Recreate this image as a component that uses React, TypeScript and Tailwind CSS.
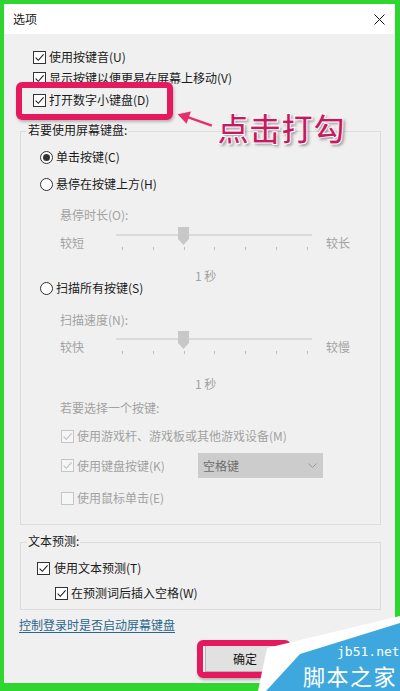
import React from 'react';

const Check: React.FC<{ checked?: boolean; disabled?: boolean }> = ({ checked = true, disabled = false }) => (
  <span
    className={`w-[13px] h-[13px] border flex items-center justify-center shrink-0 ${
      disabled ? 'border-[#c6c6c6] bg-[#f6f6f6]' : 'border-[#333333] bg-white'
    }`}
  >
    {checked && (
      <svg width="11" height="11" viewBox="0 0 11 11">
        <path d="M1.6 5.6 L4.3 8.3 L9.6 2.4" fill="none" stroke={disabled ? '#bdbdbd' : '#1f1f1f'} strokeWidth="1.1" />
      </svg>
    )}
  </span>
);

const Radio: React.FC<{ selected?: boolean }> = ({ selected = false }) => (
  <span className="w-[13px] h-[13px] rounded-full border border-[#333333] bg-white flex items-center justify-center shrink-0">
    {selected && <span className="w-[7px] h-[7px] rounded-full bg-[#333333]" />}
  </span>
);

const Row: React.FC<{ className?: string; children: React.ReactNode }> = ({ className = '', children }) => (
  <div className={`flex items-center h-[12px] leading-[12px] whitespace-nowrap ${className}`}>{children}</div>
);

const Slider: React.FC<{ left: string; right: string; className?: string }> = ({ left, right, className = '' }) => (
  <div className={`flex h-[26px] pl-[39px] text-[#a2a2a2] ${className}`}>
    <span className="w-[56px] mt-[11px] h-[12px] leading-[12px]">{left}</span>
    <div className="relative w-[196px] flex flex-col">
      <div className="mt-[8px] h-[2px] bg-[#dadada]" />
      <div className="mt-[11px] h-[3px] flex justify-between pl-[6px] pr-[4px]">
        {Array.from({ length: 7 }).map((_, i) => (
          <span key={i} className="w-px h-[3px] bg-[#bdbdbd]" />
        ))}
      </div>
      <svg className="absolute left-[62px] top-[1px]" width="11" height="18" viewBox="0 0 11 18">
        <path d="M0 0H11V12L5.5 18L0 12Z" fill="#c8c8c8" />
      </svg>
    </div>
    <span className="ml-[14px] mt-[11px] h-[12px] leading-[12px]">{right}</span>
  </div>
);

export default function App() {
  return (
    <div className="relative w-[400px] h-[691px] bg-[#2fd62f] pt-[4px] pl-[4px] pr-[5px] pb-[8px] overflow-hidden font-['Noto_Sans_CJK_SC','Noto_Sans',sans-serif] text-[12px] text-[#1a1a1a]">
      <div className="h-full flex flex-col bg-[#f0f0f0]">
        {/* Title bar */}
        <div className="h-[30px] shrink-0 bg-white flex items-center justify-between pl-[9px] pr-[10px]">
          <span className="leading-[12px]">选项</span>
          <svg width="11" height="11" viewBox="0 0 11 11">
            <path d="M0.5 0.5 L10.5 10.5 M10.5 0.5 L0.5 10.5" stroke="#111" strokeWidth="1" />
          </svg>
        </div>

        {/* Top options */}
        <Row className="mt-[17px] ml-[29px] gap-[3px]">
          <Check />
          <span>使用按键音(U)</span>
        </Row>
        <Row className="mt-[9px] ml-[29px] gap-[3px]">
          <Check />
          <span>显示按键以便更易在屏幕上移动(V)</span>
        </Row>
        <Row className="mt-[10px] ml-[29px] gap-[3px]">
          <Check />
          <span>打开数字小键盘(D)</span>
        </Row>

        {/* On-screen keyboard group */}
        <div className="mt-[25px] ml-[16px] mr-[14px] border border-[#dcdcdc] flex flex-col pb-[20px]">
          <Row className="-mt-[8px] ml-[6px] self-start px-[1px] bg-[#f0f0f0]">若要使用屏幕键盘:</Row>
          <Row className="mt-[15px] pl-[19px] gap-[3px]">
            <Radio selected />
            <span>单击按键(C)</span>
          </Row>
          <Row className="mt-[15px] pl-[19px] gap-[3px]">
            <Radio />
            <span>悬停在按键上方(H)</span>
          </Row>
          <Row className="mt-[19px] pl-[39px] text-[#a2a2a2]">悬停时长(O):</Row>
          <Slider left="较短" right="较长" className="mt-[5px]" />
          <Row className="mt-[18px] pl-[174px] text-[#a2a2a2]">1 秒</Row>
          <Row className="pl-[19px] gap-[3px]">
            <Radio />
            <span>扫描所有按键(S)</span>
          </Row>
          <Row className="mt-[20px] pl-[39px] text-[#a2a2a2]">扫描速度(N):</Row>
          <Slider left="较快" right="较慢" className="mt-[4px]" />
          <Row className="mt-[22px] pl-[174px] text-[#a2a2a2]">1 秒</Row>
          <Row className="mt-[12px] pl-[39px] text-[#a2a2a2]">若要选择一个按键:</Row>
          <Row className="mt-[16px] pl-[40px] gap-[3px] text-[#a2a2a2]">
            <Check disabled />
            <span>使用游戏杆、游戏板或其他游戏设备(M)</span>
          </Row>
          <div className="mt-[11px] h-[25px] pl-[40px] flex items-center text-[#a2a2a2] leading-[12px]">
            <div className="w-[137px] flex items-center gap-[3px]">
              <Check disabled />
              <span>使用键盘按键(K)</span>
            </div>
            <div className="w-[125px] h-[25px] bg-[#cccccc] flex items-center justify-between pl-[5px] pr-[6px] text-[#6e6e6e]">
              <span>空格键</span>
              <svg width="9" height="5" viewBox="0 0 9 5">
                <path d="M0.5 0.5 L4.5 4.5 L8.5 0.5" fill="none" stroke="#9a9a9a" strokeWidth="1" />
              </svg>
            </div>
          </div>
          <Row className="mt-[14px] pl-[40px] gap-[3px] text-[#a2a2a2]">
            <Check disabled checked={false} />
            <span>使用鼠标单击(E)</span>
          </Row>
        </div>

        {/* Text prediction group */}
        <div className="mt-[17px] ml-[16px] mr-[14px] border border-[#dcdcdc] flex flex-col pb-[10px]">
          <Row className="-mt-[8px] ml-[6px] self-start px-[1px] bg-[#f0f0f0]">文本预测:</Row>
          <Row className="mt-[15px] pl-[16px] gap-[4px]">
            <Check />
            <span>使用文本预测(T)</span>
          </Row>
          <Row className="mt-[13px] pl-[34px] gap-[3px]">
            <Check />
            <span>在预测词后插入空格(W)</span>
          </Row>
        </div>

        <Row className="mt-[9px] ml-[15px] self-start text-[#2b678c] underline underline-offset-2">控制登录时是否启动屏幕键盘</Row>

        <button className="mt-[14px] ml-[201px] w-[80px] h-[27px] shrink-0 bg-[#e1e1e1] border border-[#b4b4b4] text-[12px] text-[#111] leading-[12px]">
          确定
        </button>
      </div>

      {/* Annotations */}
      <div className="absolute left-[16px] top-[82px] w-[157px] h-[38px] border-[6px] border-[#e5195e] rounded-[6px] shadow-[1px_2px_3px_rgba(0,0,0,0.25)]" />
      <svg className="absolute left-[174px] top-[106px]" width="44" height="26" viewBox="0 0 44 26">
        <polygon
          points="3,8 17.5,5 15.6,10.2 38.6,18.3 37.6,21.2 14.6,13.1 12.7,18.3"
          fill="#e0306d"
          stroke="#ffffff"
          strokeWidth="0.6"
        />
      </svg>
      <div className="absolute left-[217px] top-[111px] text-[32px] leading-[32px] font-bold text-[#c41a5f] [-webkit-text-stroke:1px_#ffffff] [text-shadow:2px_2px_3px_rgba(0,0,0,0.35)] whitespace-nowrap">
        点击打勾
      </div>
      <div className="absolute left-[197px] top-[640px] w-[94px] h-[38px] border-[6px] border-[#e5195e] rounded-[6px] shadow-[1px_2px_3px_rgba(0,0,0,0.25)]" />

      {/* Watermark */}
      <svg className="absolute left-0 top-0" width="400" height="691" viewBox="0 0 400 691">
        <polygon points="400,616 400,691 258,691 267,648" fill="#ffffff" />
        <polygon points="400,623 400,691 266,691 300,654" fill="#3ea8de" />
      </svg>
      <div className="absolute left-[337px] top-[645px] text-[13px] leading-[13px] text-white font-['DejaVu_Sans_Mono',monospace]">
        jb51.net
      </div>
      <div className="absolute left-[303px] top-[664px] text-[22px] leading-[22px] tracking-[1.5px] text-white whitespace-nowrap">
        脚本之家
      </div>
    </div>
  );
}
